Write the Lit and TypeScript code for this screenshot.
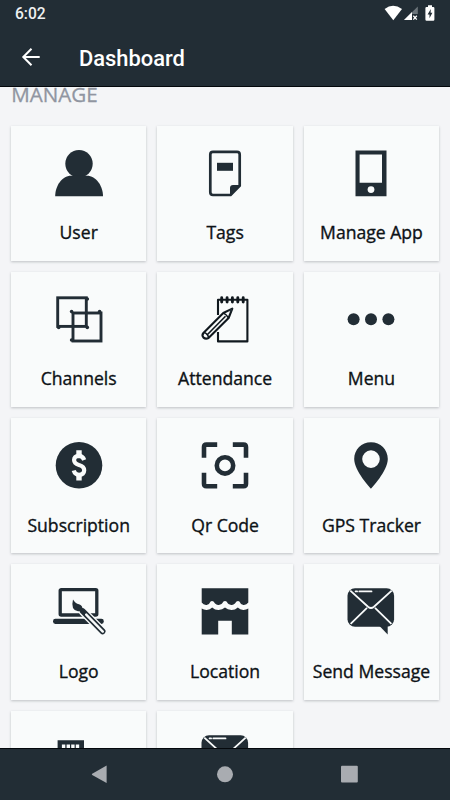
import { LitElement, html, css, svg } from "lit";
import { customElement } from "lit/decorators.js";

const envelope = svg`
  <rect x="6.5" y="1.2" width="46.6" height="38.6" rx="7.5"/>
  <path d="M38.5 39 L46.7 47.6 V38 Z"/>
  <g fill="none" stroke="#f9fbfb" stroke-width="1.8">
    <path d="M9.3 3.6 L27.3 20 Q30 22 32.7 20 L50.7 3.6"/>
    <path d="M9.6 36.8 L26 20.8 M50.4 36.8 L34 20.8"/>
    <path d="M18.3 4.4 H30.5 M14.6 4.4 h1.5" stroke-linecap="round"/>
  </g>`;

const icons = {
  user: svg`<circle cx="30" cy="14.8" r="13.7"/><path d="M6.2 47.2 C6.2 37 13 26.8 22 26.8 H38 C47 26.8 54 37 54 47.2 Z"/>`,
  tags: svg`
    <path d="M18 2.9 H42 Q44.7 2.9 44.7 5.6 V36.6 L35.6 46 H18 Q15.3 46 15.3 43.3 V5.6 Q15.3 2.9 18 2.9 Z" fill="none" stroke="#222d35" stroke-width="2.7"/>
    <rect x="22" y="13.8" width="16" height="8"/>
    <path d="M35 46 V39 Q35 36 38 36 H45.5 L36 46.5 Z"/>`,
  phone: svg`<path fill-rule="evenodd" d="M14.5 1.6 H45.5 V47.3 H14.5 Z M18.6 5.6 V33.8 H41 V5.6 Z"/><circle cx="30" cy="40.6" r="3.4" fill="#f9fbfb"/>`,
  channels: svg`
    <g fill="none" stroke="#222d35" stroke-width="2.9"><rect x="8.7" y="2.8" width="28.6" height="28.6"/><rect x="24" y="18" width="28" height="28"/></g>
    <circle cx="38.3" cy="4" r="1.8"/><circle cx="9.7" cy="32.4" r="1.8"/><circle cx="38.3" cy="32.4" r="1.8"/>
    <circle cx="22.6" cy="16.6" r="1.8"/><circle cx="50.6" cy="16.6" r="1.8"/><circle cx="22.6" cy="45" r="1.8"/>`,
  attendance: svg`
    <g fill="none" stroke="#10181e" stroke-width="2.1" stroke-linejoin="round">
      <path d="M23 20 V4.8 H52.4 V46.4 H23 V37"/>
      <g stroke-linecap="round" stroke-width="2.9"><path d="M26.7 2.8 V7 M32.1 2.8 V7 M37.4 2.8 V7 M42.8 2.8 V7 M48.2 2.8 V7"/></g>
      <path d="M8.4 38 L28.3 18 L37.3 13.6 L33.6 23 L13.5 43 Q10.7 44.5 8.5 42.6 Q6.5 40.4 8.4 38 Z" fill="#f9fbfb"/>
      <path d="M28.3 18 Q31 19 33.6 23 M12 40 L30.5 21.3" stroke-width="1.6"/>
      <path d="M9 37.6 Q12.6 38.6 13.6 42.6" stroke-width="1.6"/>
    </g>
    <path d="M37.9 13.1 L33.4 15.2 L36 17.6 Z"/>`,
  menu: svg`<circle cx="12.6" cy="24.3" r="6"/><circle cx="30" cy="24.3" r="6"/><circle cx="47.4" cy="24.3" r="6"/>`,
  subscription: svg`<circle cx="30" cy="24.3" r="23.3"/>
    <path d="M35.2 19 Q33.8 14.9 30 14.9 Q25.1 15.1 25.1 19.1 Q25.1 22.5 30 24.1 Q35.2 25.6 35.2 29.4 Q35 33.6 30 33.8 Q26 33.8 24.7 29.5" fill="none" stroke="#f9fbfb" stroke-width="4.2"/>
    <path d="M27.3 9.2 h5.4 v6 h-5.4 z M27.3 33.6 h5.4 v6 h-5.4 z" fill="#f9fbfb"/>`,
  qr: svg`<g fill="none" stroke="#222d35" stroke-width="4.6">
      <path d="M9 16.8 V6 Q9 3.6 11.4 3.6 H22.2 M37.8 3.6 H48.6 Q51 3.6 51 6 V16.8 M51 31.8 V42.8 Q51 45.2 48.6 45.2 H37.8 M22.2 45.2 H11.4 Q9 45.2 9 42.8 V31.8"/>
      <circle cx="30" cy="24.4" r="8.2"/></g>`,
  gps: svg`<path fill-rule="evenodd" d="M30 1.3 C20.5 1.3 13.2 8.6 13.2 18 C13.2 30 30 47.8 30 47.8 C30 47.8 46.8 30 46.8 18 C46.8 8.6 39.5 1.3 30 1.3 Z M30 9.3 A8.8 8.8 0 1 1 30 26.9 A8.8 8.8 0 1 1 30 9.3 Z"/>`,
  logo: svg`
    <rect x="11.2" y="2.6" width="36.6" height="25.4" rx="1" fill="none" stroke="#222d35" stroke-width="3.3"/>
    <rect x="4" y="31.8" width="50.8" height="5.2" rx="2.4"/>
    <path d="M34 24.5 L54 44.8" stroke="#f9fbfb" stroke-width="8.5" stroke-linecap="round"/>
    <path d="M24 12.4 Q26.3 16.6 30 17.2 Q33.6 18.4 33.4 21.6 Q32.4 24.6 29 24.2 Q21.4 23 24 12.4 Z"/>
    <path d="M33.6 24 L53.6 44.4" stroke="#222d35" stroke-width="5.8" stroke-linecap="round"/>
    <path d="M37.2 27.6 L53.8 44.6" stroke="#f9fbfb" stroke-width="2.4" stroke-linecap="round"/>`,
  location: svg`
    <path d="M6.7 1.2 H53.3 V15.5 Q51.5 18.2 48.4 17.9 Q45.4 17.6 44.4 14.6 Q43 13.4 41.2 14.8 Q39.8 18 36.2 17.9 Q33 17.8 31.8 14.8 Q30 13.4 28.2 14.8 Q27 17.8 23.8 17.9 Q20.2 18 18.8 14.8 Q17 13.4 15.6 14.6 Q14.6 17.6 11.6 17.9 Q8.5 18.2 6.7 15.5 Z"/>
    <path d="M6.7 21.6 Q9 23 11.8 22.9 Q15 22.6 17.2 20.4 Q20 23 23.6 22.9 Q27.4 22.8 30 20.4 Q32.6 22.8 36.4 22.9 Q40 23 42.8 20.4 Q45 22.6 48.2 22.9 Q51 23 53.3 21.6 V47.4 H36.8 V33.8 H23.2 V47.4 H6.7 Z"/>`,
  message: envelope,
  building: svg`<path d="M8.6 6.2 H35 V48 H8.6 Z"/><path d="M12.9 10.6h3.4v3.4h-3.4z M17.6 10.6h3.4v3.4h-3.4z M22.2 10.6h3.4v3.4h-3.4z M26.8 10.6h3.4v3.4h-3.4z" fill="#f9fbfb"/>`,
};

const tiles: { icon: keyof typeof icons; label: string }[] = [
  { icon: "user", label: "User" },
  { icon: "tags", label: "Tags" },
  { icon: "phone", label: "Manage App" },
  { icon: "channels", label: "Channels" },
  { icon: "attendance", label: "Attendance" },
  { icon: "menu", label: "Menu" },
  { icon: "subscription", label: "Subscription" },
  { icon: "qr", label: "Qr Code" },
  { icon: "gps", label: "GPS Tracker" },
  { icon: "logo", label: "Logo" },
  { icon: "location", label: "Location" },
  { icon: "message", label: "Send Message" },
  { icon: "building", label: "" },
  { icon: "message", label: "" },
];

@customElement("app-root")
export class AppRoot extends LitElement {
  static styles = css`
    :host { display: flex; flex-direction: column; height: 800px; width: 450px; overflow: hidden; background: #f4f5f7; box-sizing: border-box; }
    * { box-sizing: border-box; }
    .top { flex: none; height: 87px; background: #222d35; border-bottom: 1px solid #04080c; color: #fff; font-family: Roboto, sans-serif; }
    .status { height: 28px; display: flex; justify-content: space-between; padding-left: 15px; }
    .time { font-size: 15.6px; line-height: 28px; font-weight: 500; color: #eef0f1; }
    .bar { height: 58px; display: flex; align-items: center; }
    .back { width: 79px; height: 58px; }
    .title { font-size: 21.9px; line-height: 30px; font-weight: 500; margin: 0; padding-top: 3px; }
    .content { flex: 1; min-height: 0; overflow: hidden; padding: 0 11px; }
    .section { height: 38.6px; margin: 0; font: 400 20.6px/30px "Open Sans", "Noto Sans", sans-serif; color: #9095a1; -webkit-text-stroke: 0.3px #9095a1; }
    .section span { display: block; margin: 0 0 0 .3px; height: 30px; line-height: 14px; }
    .grid { display: grid; grid-template-columns: repeat(3, 135.4px); grid-auto-rows: 135.3px; gap: 11px; }
    .card { background: #f9fbfb; box-shadow: 0 1.2px 2.5px rgba(50, 60, 70, .28); display: flex; flex-direction: column; align-items: center; padding-top: 23px; }
    .icon { flex: none; width: 60px; height: 50px; fill: #222d35; }
    .label { margin-top: 20.4px; font: 400 17.6px/26px "Open Sans", "Noto Sans", sans-serif; color: #0d1216; -webkit-text-stroke: 0.35px #0d1216; white-space: nowrap; }
    .nav { flex: none; height: 52.5px; background: #222d35; border-top: 1px solid #04080c; }
    .nav svg { display: block; }
  `;

  render() {
    return html`
      <header class="top">
        <div class="status">
          <span class="time">6:02</span>
          <svg width="70" height="28" viewBox="380 0 70 28" fill="#fff">
            <path d="M384.6 9 Q393 2.6 402 9 L393.3 20.2 Z"/>
            <path d="M417.8 6.4 V20 H404 Z" fill="#6c757b"/>
            <path d="M412 12 V20 H404 Z"/>
            <path d="M412 14 h6.3 v6.6 h-6.3 z" fill="#222d35"/>
            <path d="M413.3 15.8 L416.8 19.6 M416.8 15.8 L413.3 19.6" stroke="#fff" stroke-width="1.3"/>
            <path d="M428 5.3 h4 v1.6 h1.2 q1.2 0 1.2 1.2 V19.6 q0 1.2 -1.2 1.2 h-6.6 q-1.2 0 -1.2 -1.2 V8.1 q0 -1.2 1.2 -1.2 h1.4 z"/>
            <path d="M430.8 9 L427.6 14.4 H429.5 V18.3 L432.4 12.8 H430.6 Z" fill="#222d35"/>
          </svg>
        </div>
        <div class="bar">
          <svg class="back" viewBox="0 28 79 58" fill="none" stroke="#fff" stroke-width="2"><path d="M39.7 57 H23.4 M31.5 48.8 L23.3 57 L31.5 65.2"/></svg>
          <h1 class="title">Dashboard</h1>
        </div>
      </header>
      <main class="content">
        <h2 class="section"><span>MANAGE</span></h2>
        <div class="grid">
          ${tiles.map((t) => html`<div class="card">
            <svg class="icon" viewBox="0 0 60 50">${icons[t.icon]}</svg>
            <span class="label">${t.label}</span>
          </div>`)}
        </div>
      </main>
      <footer class="nav">
        <svg width="450" height="52" viewBox="0 748.5 450 52" fill="#a9acb1">
          <path d="M92.2 773.2 Q91.4 773.8 92.2 774.4 L106.6 782.6 V765 Z"/>
          <circle cx="225" cy="773.8" r="8"/>
          <rect x="341" y="765.3" width="16.8" height="16.8" rx="1"/>
        </svg>
      </footer>`;
  }
}
